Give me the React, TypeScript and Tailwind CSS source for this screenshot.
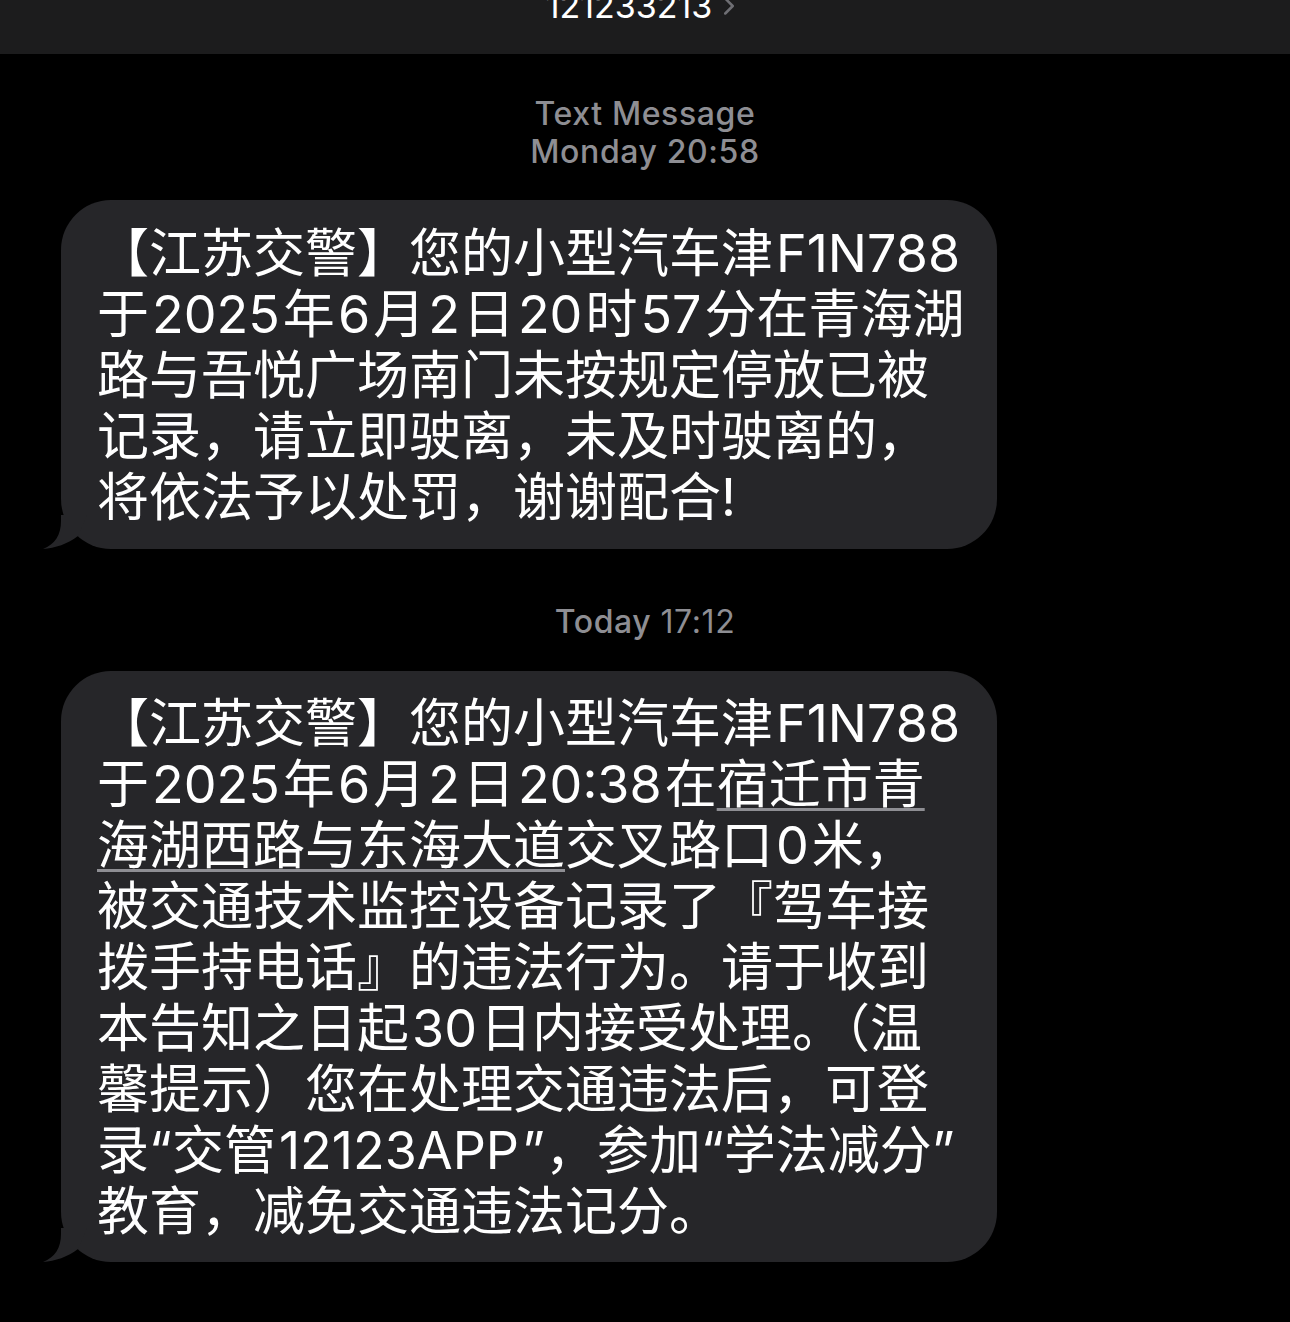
import { ChevronRight } from 'lucide-react'

type Seg = { text: string; link?: boolean }
type Line = Seg[]

const first: Line[] = [
  [{ text: '【江苏交警】您的小型汽车津F1N788' }],
  [{ text: '于2025年6月2日20时57分在青海湖' }],
  [{ text: '路与吾悦广场南门未按规定停放已被' }],
  [{ text: '记录，请立即驶离，未及时驶离的，' }],
  [{ text: '将依法予以处罚，谢谢配合!' }],
]

const second: Line[] = [
  [{ text: '【江苏交警】您的小型汽车津F1N788' }],
  [{ text: '于2025年6月2日20:38在' }, { text: '宿迁市青', link: true }],
  [{ text: '海湖西路与东海大道', link: true }, { text: '交叉路口0米，' }],
  [{ text: '被交通技术监控设备记录了『驾车接' }],
  [{ text: '拨手持电话』的违法行为。请于收到' }],
  [{ text: '本告知之日起30日内接受处理。（温' }],
  [{ text: '馨提示）您在处理交通违法后，可登' }],
  [{ text: '录“交管12123APP”，参加“学法减分”' }],
  [{ text: '教育，减免交通违法记分。' }],
]

// iOS puts a little space between CJK and latin/digit runs
function Spaced({ text }: { text: string }) {
  const parts = text.split(/([A-Za-z0-9:]+)/).filter(Boolean)
  return (
    <>
      {parts.map((p, i) =>
        /^[A-Za-z0-9:]+$/.test(p) ? (
          <span key={i} className="px-[3px]">{p}</span>
        ) : (
          <span key={i}>{p}</span>
        ),
      )}
    </>
  )
}

function Bubble({ lines, pad }: { lines: Line[]; pad: string }) {
  return (
    <div className="relative ml-[61px] w-[936px]">
      <div className={`rounded-[50px] bg-[#262629] px-[36px] ${pad} text-[52px] leading-[61px] text-white`}>
        {lines.map((line, i) => (
          <div key={i} className="whitespace-nowrap">
            {line.map((s, j) =>
              s.link ? (
                <span key={j} className="underline decoration-[#8e8e93] decoration-[3px] underline-offset-[5px]">
                  <Spaced text={s.text} />
                </span>
              ) : (
                <Spaced key={j} text={s.text} />
              ),
            )}
          </div>
        ))}
      </div>
      {/* tail */}
      <svg className="absolute -left-[18px] bottom-0" width="44" height="34" viewBox="0 0 44 34">
        <path d="M18 0 L18 6 C18 20 12 29 0 34 C12 33 25 29 35 21 L44 0 Z" fill="#262629" />
      </svg>
    </div>
  )
}

export default function App() {
  return (
    <div
      className="min-h-[1322px] w-[1290px] overflow-hidden bg-black"
      style={{ fontFamily: 'Inter, "Noto Sans CJK SC", sans-serif' }}
    >
      {/* header */}
      <div className="h-[54px] overflow-hidden bg-[#1c1c1d]">
        <div className="-mt-[14px] flex items-center justify-center">
          <span className="text-[34px] leading-[40px] font-normal text-white">121233213</span>
          <ChevronRight size={30} strokeWidth={2} className="ml-[2px] text-[#6e6e73]" />
        </div>
      </div>

      <div className="mt-[41px] text-center text-[32px] leading-[38px] font-medium tracking-[0.6px] text-[#8e8e93]">
        <div>Text Message</div>
        <div>Monday 20:58</div>
      </div>

      <div className="mt-[29px]">
        <Bubble lines={first} pad="pt-[23px] pb-[21px]" />
      </div>

      <div className="mt-[54px] text-center text-[32px] leading-[38px] font-medium tracking-[0.6px] text-[#8e8e93]">
        Today <span className="font-normal">17:12</span>
      </div>

      <div className="mt-[30px]">
        <Bubble lines={second} pad="pt-[22px] pb-[20px]" />
      </div>
    </div>
  )
}
